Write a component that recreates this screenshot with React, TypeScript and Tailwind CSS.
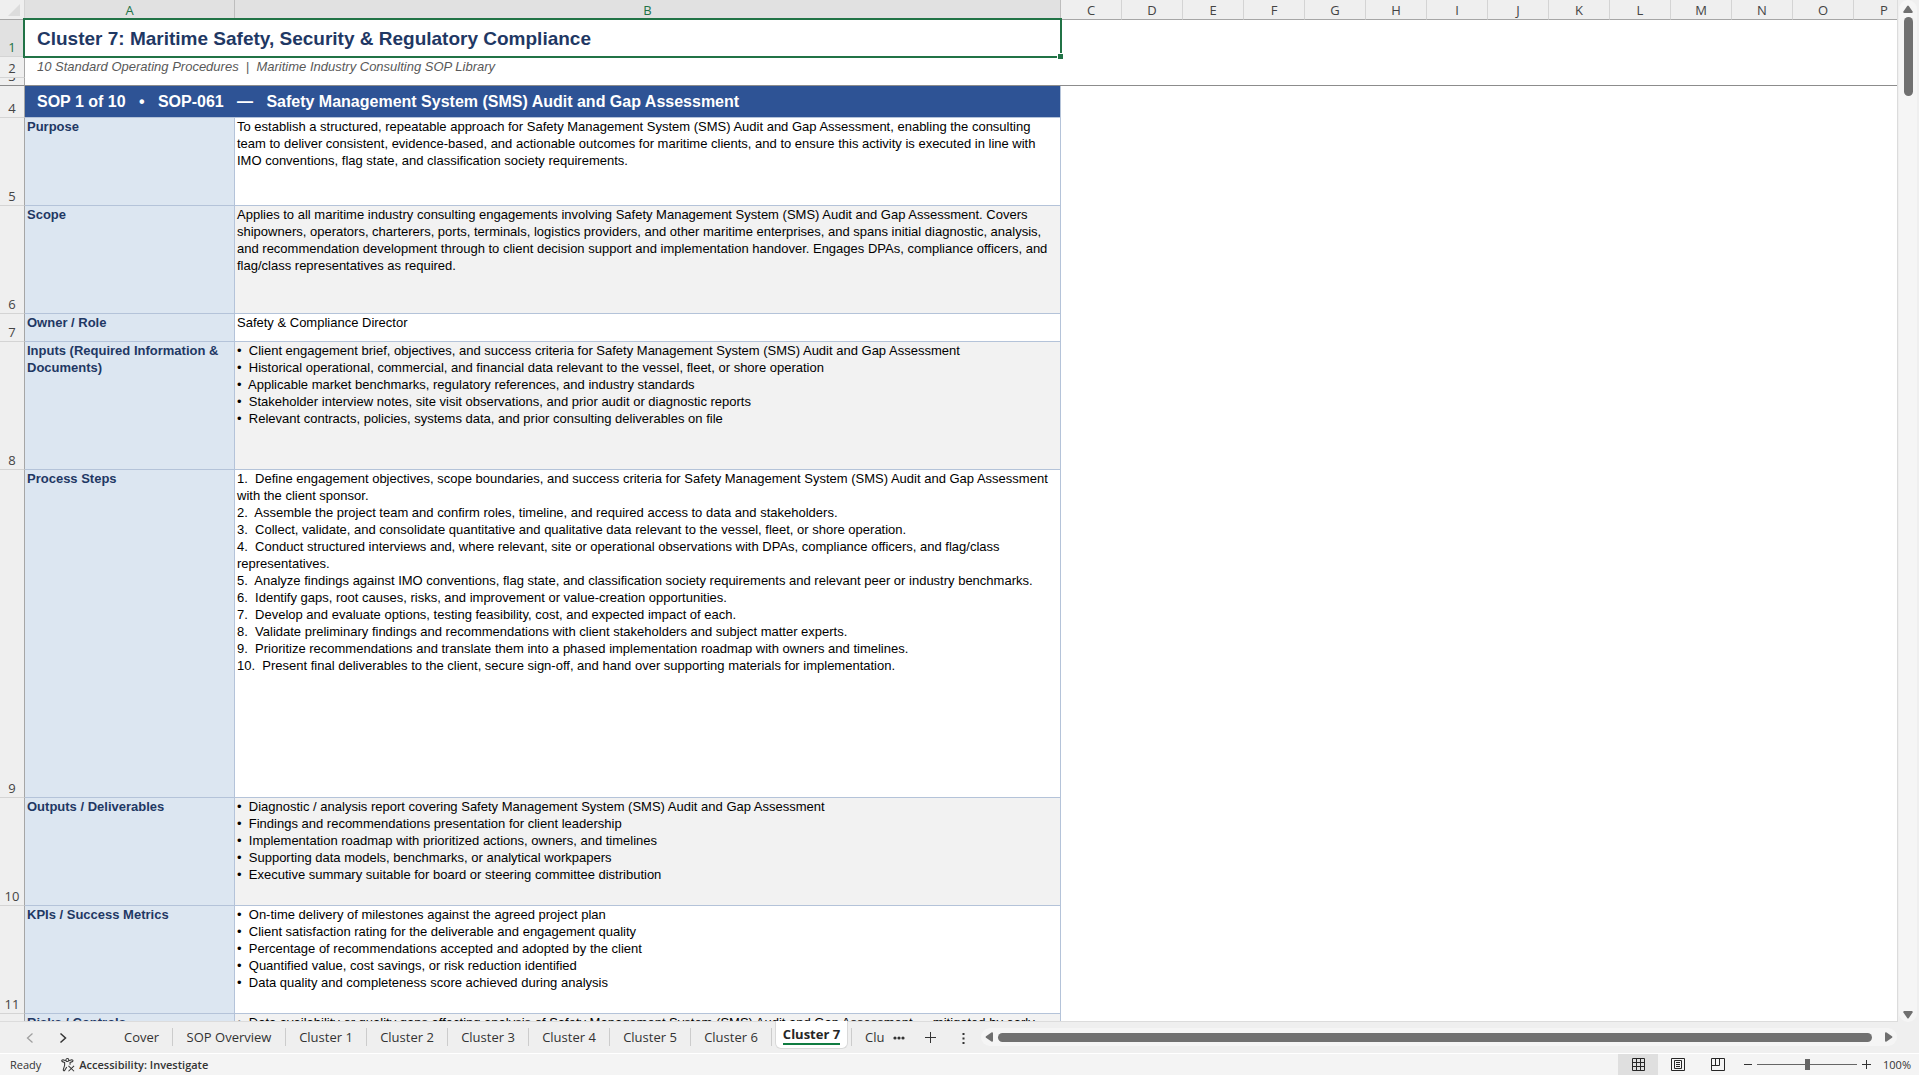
import { FC, ReactNode } from "react";
import clsx from "clsx";

interface SopRow {
  num: number;
  label: string;
  height: string;
  shaded?: boolean;
  lines: string[];
}

const extraColumns = ["C", "D", "E", "F", "G", "H", "I", "J", "K", "L", "M", "N", "O", "P"];

const sopRows: SopRow[] = [
  {
    num: 5,
    label: "Purpose",
    height: "h-[88px]",
    lines: [
      "To establish a structured, repeatable approach for Safety Management System (SMS) Audit and Gap Assessment, enabling the consulting team to deliver consistent, evidence-based, and actionable outcomes for maritime clients, and to ensure this activity is executed in line with IMO conventions, flag state, and classification society requirements.",
    ],
  },
  {
    num: 6,
    label: "Scope",
    height: "h-[108px]",
    shaded: true,
    lines: [
      "Applies to all maritime industry consulting engagements involving Safety Management System (SMS) Audit and Gap Assessment. Covers shipowners, operators, charterers, ports, terminals, logistics providers, and other maritime enterprises, and spans initial diagnostic, analysis, and recommendation development through to client decision support and implementation handover. Engages DPAs, compliance officers, and flag/class representatives as required.",
    ],
  },
  {
    num: 7,
    label: "Owner / Role",
    height: "h-[28px]",
    lines: ["Safety & Compliance Director"],
  },
  {
    num: 8,
    label: "Inputs (Required Information & Documents)",
    height: "h-[128px]",
    shaded: true,
    lines: [
      "•  Client engagement brief, objectives, and success criteria for Safety Management System (SMS) Audit and Gap Assessment",
      "•  Historical operational, commercial, and financial data relevant to the vessel, fleet, or shore operation",
      "•  Applicable market benchmarks, regulatory references, and industry standards",
      "•  Stakeholder interview notes, site visit observations, and prior audit or diagnostic reports",
      "•  Relevant contracts, policies, systems data, and prior consulting deliverables on file",
    ],
  },
  {
    num: 9,
    label: "Process Steps",
    height: "h-[328px]",
    lines: [
      "1.  Define engagement objectives, scope boundaries, and success criteria for Safety Management System (SMS) Audit and Gap Assessment with the client sponsor.",
      "2.  Assemble the project team and confirm roles, timeline, and required access to data and stakeholders.",
      "3.  Collect, validate, and consolidate quantitative and qualitative data relevant to the vessel, fleet, or shore operation.",
      "4.  Conduct structured interviews and, where relevant, site or operational observations with DPAs, compliance officers, and flag/class representatives.",
      "5.  Analyze findings against IMO conventions, flag state, and classification society requirements and relevant peer or industry benchmarks.",
      "6.  Identify gaps, root causes, risks, and improvement or value-creation opportunities.",
      "7.  Develop and evaluate options, testing feasibility, cost, and expected impact of each.",
      "8.  Validate preliminary findings and recommendations with client stakeholders and subject matter experts.",
      "9.  Prioritize recommendations and translate them into a phased implementation roadmap with owners and timelines.",
      "10.  Present final deliverables to the client, secure sign-off, and hand over supporting materials for implementation.",
    ],
  },
  {
    num: 10,
    label: "Outputs / Deliverables",
    height: "h-[108px]",
    shaded: true,
    lines: [
      "•  Diagnostic / analysis report covering Safety Management System (SMS) Audit and Gap Assessment",
      "•  Findings and recommendations presentation for client leadership",
      "•  Implementation roadmap with prioritized actions, owners, and timelines",
      "•  Supporting data models, benchmarks, or analytical workpapers",
      "•  Executive summary suitable for board or steering committee distribution",
    ],
  },
  {
    num: 11,
    label: "KPIs / Success Metrics",
    height: "h-[108px]",
    lines: [
      "•  On-time delivery of milestones against the agreed project plan",
      "•  Client satisfaction rating for the deliverable and engagement quality",
      "•  Percentage of recommendations accepted and adopted by the client",
      "•  Quantified value, cost savings, or risk reduction identified",
      "•  Data quality and completeness score achieved during analysis",
    ],
  },
  {
    num: 12,
    label: "Risks / Controls",
    height: "h-[108px]",
    shaded: true,
    lines: [
      "•  Data availability or quality gaps affecting analysis of Safety Management System (SMS) Audit and Gap Assessment — mitigated by early",
    ],
  },
];

const sheets = [
  { name: "Cover", width: "w-[62px]" },
  { name: "SOP Overview", width: "w-[113px]" },
  { name: "Cluster 1", width: "w-[81px]" },
  { name: "Cluster 2", width: "w-[81px]" },
  { name: "Cluster 3", width: "w-[81px]" },
  { name: "Cluster 4", width: "w-[81px]" },
  { name: "Cluster 5", width: "w-[81px]" },
  { name: "Cluster 6", width: "w-[81px]" },
];

const RowHeader: FC<{ children?: ReactNode; selected?: boolean }> = ({
  children,
  selected,
}) => (
  <th
    scope="row"
    className={clsx(
      "overflow-hidden border-r border-b border-r-[#a6a6a6] border-b-[#d4d4d4] p-0 text-center align-bottom font-['Open_Sans',sans-serif] text-[13px] leading-[17px] font-normal",
      selected ? "bg-[#e1e1e1] text-[#217346]" : "bg-[#efefef] text-[#444444]"
    )}
  >
    {children}
  </th>
);

const Sheet = () => (
  <table className="w-[1915px] table-fixed border-separate border-spacing-0">
    <colgroup>
      <col className="w-[25px]" />
      <col className="w-[210px]" />
      <col className="w-[826px]" />
      {extraColumns.map((c) => (
        <col key={c} className="w-[61px]" />
      ))}
    </colgroup>
    <thead>
      <tr className="font-['Open_Sans',sans-serif] text-[13px] leading-[18px] text-[#444444]">
        <th className="h-5 border-r border-b border-r-[#d4d4d4] border-b-[#a6a6a6] bg-[#efefef] p-0">
          <svg className="ml-auto mr-1 size-3" viewBox="0 0 12 12" fill="#dcdcdc">
            <path d="M12 0V12H0Z" />
          </svg>
        </th>
        {["A", "B"].map((c) => (
          <th
            key={c}
            scope="col"
            className="h-5 border-r border-b border-r-[#bdbdbd] border-b-[#a6a6a6] bg-[#e1e1e1] p-0 pt-px font-normal text-[#217346]"
          >
            {c}
          </th>
        ))}
        {extraColumns.map((c) => (
          <th
            key={c}
            scope="col"
            className="h-5 border-r border-b border-r-[#d4d4d4] border-b-[#a6a6a6] bg-[#efefef] p-0 pt-px font-normal"
          >
            {c}
          </th>
        ))}
      </tr>
    </thead>
    <tbody className="font-['Liberation_Sans',Arial,sans-serif] text-[13px] leading-[17px] text-black">
      <tr>
        <RowHeader selected>1</RowHeader>
        <td colSpan={2} className="relative h-[37px] p-0 pl-3 align-middle text-[19px] leading-6 font-bold text-[#1f3864]">
          Cluster 7: Maritime Safety, Security &amp; Regulatory Compliance
          <span className="absolute -top-0.5 -right-px -bottom-px -left-0.5 border-2 border-[#217346]" />
          <span className="absolute -right-0.5 -bottom-0.5 size-1.5 border-t border-l border-white bg-[#217346]" />
        </td>
        <td colSpan={14} />
      </tr>
      <tr>
        <RowHeader>2</RowHeader>
        <td colSpan={2} className="h-[21px] p-0 pl-3 align-top leading-[19px] text-[#595959] italic">
          <span className="whitespace-pre">10 Standard Operating Procedures  |  Maritime Industry Consulting SOP Library</span>
        </td>
        <td colSpan={14} />
      </tr>
      <tr>
        <th
          scope="row"
          className="h-2 border-r border-b border-r-[#a6a6a6] border-b-[#8c8c8c] bg-[#efefef] p-0 font-['Open_Sans',sans-serif] text-[13px] font-normal text-[#444444]"
        >
          <div className="flex h-[7px] items-end justify-center overflow-hidden leading-[17px]">3</div>
        </th>
        <td colSpan={16} className="border-b border-[#8c8c8c] p-0" />
      </tr>
      <tr>
        <RowHeader>4</RowHeader>
        <td
          colSpan={2}
          className="h-8 border-r border-b border-[#b4c3d9] bg-[#2e5395] p-0 pl-3 align-middle text-[16px] leading-5 font-bold whitespace-pre text-white"
        >
          SOP 1 of 10   •   SOP-061   —   Safety Management System (SMS) Audit and Gap Assessment
        </td>
        <td colSpan={14} />
      </tr>
      {sopRows.map((row) => (
        <tr key={row.num}>
          <RowHeader>{row.num}</RowHeader>
          <td
            className={clsx(
              "border-r border-b border-[#b4c3d9] bg-[#dce6f1] p-0 pl-0.5 align-top font-bold text-[#1f3864]",
              row.height
            )}
          >
            {row.label}
          </td>
          <td
            className={clsx(
              "border-r border-b border-[#b4c3d9] p-0 pl-0.5 align-top",
              row.shaded && "bg-[#f2f2f2]"
            )}
          >
            {row.lines.map((line) => (
              <p key={line} className="whitespace-pre-wrap">
                {line}
              </p>
            ))}
          </td>
          <td colSpan={14} />
        </tr>
      ))}
    </tbody>
  </table>
);

const VerticalScroll = () => (
  <div className="flex w-[22px] shrink-0 border-l border-[#dcdcdc] bg-[#efefef] pl-px">
    <div className="flex w-[18px] flex-col items-center rounded-full bg-[#f5f5f5] pt-1 pb-[3px]">
      <button aria-label="Scroll up" className="flex h-[13px] items-start pt-px">
        <svg className="h-2 w-[10px]" viewBox="0 0 10 8" fill="#6f6f6f">
          <path d="M4.2 1Q5 0 5.8 1L9.6 6.4Q10 8 8.8 8H1.2Q0 8 .4 6.4Z" />
        </svg>
      </button>
      <div className="h-[79px] w-[9px] rounded-full bg-[#707070]" />
      <button aria-label="Scroll down" className="mt-auto">
        <svg className="h-2 w-[10px]" viewBox="0 0 10 8" fill="#6f6f6f">
          <path d="M4.2 7Q5 8 5.8 7L9.6 1.6Q10 0 8.8 0H1.2Q0 0 .4 1.6Z" />
        </svg>
      </button>
    </div>
  </div>
);

const TabBar = () => (
  <div className="flex h-8 shrink-0 items-start border-b border-white bg-[#efefef] pr-[22px] font-['Open_Sans',sans-serif] text-[13px] text-[#333333]">
    <div className="flex h-[31px] w-[111px] shrink-0 items-center gap-[25px] pl-[26px]">
      <button aria-label="Previous sheet">
        <svg className="h-3 w-2" viewBox="0 0 8 12" fill="none" stroke="#a0a0a0" strokeWidth="1.3">
          <path d="M6.5 1.5L1.5 6L6.5 10.5" />
        </svg>
      </button>
      <button aria-label="Next sheet">
        <svg className="h-3 w-2" viewBox="0 0 8 12" fill="none" stroke="#333333" strokeWidth="1.5">
          <path d="M1.5 1.5L6.5 6L1.5 10.5" />
        </svg>
      </button>
    </div>
    {sheets.map((s) => (
      <button
        key={s.name}
        className={clsx("mt-[6px] h-[18px] shrink-0 border-r border-[#cccccc] leading-[18px]", s.width)}
      >
        {s.name}
      </button>
    ))}
    <button className="z-10 -mt-px ml-[3px] flex h-7 w-[73px] shrink-0 justify-center rounded-b-md border border-t-0 border-[#d9d9d9] bg-white pt-1 font-bold text-[#262626]">
      <span className="h-5 border-b-2 border-[#107c41] leading-[18px]">Cluster 7</span>
    </button>
    <button className="mt-[6px] ml-[3px] h-[18px] w-[34px] shrink-0 border-l border-[#cccccc] pl-[13px] text-left leading-[18px]">
      Clu
    </button>
    <div className="flex h-[31px] w-[96px] shrink-0 items-center pl-2">
      <button aria-label="More sheets">
        <svg className="h-1 w-3" viewBox="0 0 12 4" fill="#333333">
          <circle cx="2" cy="2" r="1.6" />
          <circle cx="6" cy="2" r="1.6" />
          <circle cx="10" cy="2" r="1.6" />
        </svg>
      </button>
      <button aria-label="New sheet" className="ml-5">
        <svg className="size-[11px]" viewBox="0 0 11 11" stroke="#333333">
          <path d="M5.5 0V11M0 5.5H11" />
        </svg>
      </button>
      <button aria-label="Tab options" className="ml-[26px]">
        <svg className="h-3 w-[3px]" viewBox="0 0 3 12" fill="#333333">
          <path d="M.5 1h2v2h-2zM.5 5.5h2v2h-2zM.5 10h2v2h-2z" />
        </svg>
      </button>
    </div>
    <div className="mt-[6px] flex h-[18px] min-w-0 flex-1 items-center gap-[5px] rounded-full bg-[#f5f5f5] px-1">
      <button aria-label="Scroll left">
        <svg className="h-[10px] w-2" viewBox="0 0 8 10" fill="#6f6f6f">
          <path d="M1 4.2Q0 5 1 5.8L6.4 9.6Q8 10 8 8.8V1.2Q8 0 6.4 .4Z" />
        </svg>
      </button>
      <div className="mr-2 h-[9px] flex-1 rounded-full bg-[#707070]" />
      <button aria-label="Scroll right">
        <svg className="h-[10px] w-2" viewBox="0 0 8 10" fill="#6f6f6f">
          <path d="M7 4.2Q8 5 7 5.8L1.6 9.6Q0 10 0 8.8V1.2Q0 0 1.6 .4Z" />
        </svg>
      </button>
    </div>
  </div>
);

const StatusBar = () => (
  <div className="flex h-[21px] shrink-0 items-center bg-[#f4f4f4] pl-[10px] font-['Open_Sans',sans-serif] text-[11px] leading-[18px] text-[#333333]">
    <span>Ready</span>
    <button className="ml-5 flex items-center gap-1 font-semibold">
      <svg className="h-[14px] w-[14px]" viewBox="0 0 15 15" fill="none" stroke="#333333" strokeWidth="1.1">
        <circle cx="6.8" cy="2.2" r="1.6" />
        <path d="M5.2 2.9L2.2 2Q.6 1.9 .8 3.2Q1 3.9 3.9 4.8V7.8L2.4 12.6Q2.4 14 3.7 13.6L6.2 9.6M8.4 2.9L11.4 2Q13 1.9 12.8 3.2Q12.6 3.9 9.7 4.8V7.2" />
        <path d="M8 8.4L14 14.2M14 8.4L8 14.2" />
      </svg>
      Accessibility: Investigate
    </button>
    <div className="ml-auto flex h-full items-center">
      <button aria-label="Normal view" className="grid h-full w-10 place-items-center bg-[#dfdfdf]">
        <svg className="size-[13px]" viewBox="0 0 13 13" fill="none" stroke="#262626">
          <path d="M.5 .5h12v12H.5zM4.5 .5v12M8.5 .5v12M.5 4.5h12M.5 8.5h12" />
        </svg>
      </button>
      <button aria-label="Page layout view" className="grid h-full w-10 place-items-center">
        <svg className="h-[13px] w-[14px]" viewBox="0 0 14 13" fill="none" stroke="#262626">
          <path d="M.5 .5h13v12H.5zM3.5 2.5h7v8h-7zM5 4.5h4M5 6.5h4M5 8.5h4" />
        </svg>
      </button>
      <button aria-label="Page break preview" className="grid h-full w-10 place-items-center">
        <svg className="h-[13px] w-[14px]" viewBox="0 0 14 13" fill="none" stroke="#262626">
          <path d="M.5 .5h13v12H.5zM.5 7.5h8V.5M4.5 .5v7" />
        </svg>
      </button>
      <button aria-label="Zoom out" className="ml-[6px]">
        <svg className="size-2" viewBox="0 0 8 8" stroke="#333333">
          <path d="M0 3.5H8" />
        </svg>
      </button>
      <input
        type="range"
        aria-label="Zoom"
        min={10}
        max={190}
        defaultValue={100}
        className="mx-[5px] h-3 w-[100px] appearance-none bg-transparent [&::-webkit-slider-runnable-track]:h-px [&::-webkit-slider-runnable-track]:bg-[#666666] [&::-webkit-slider-thumb]:-mt-[5px] [&::-webkit-slider-thumb]:h-[11px] [&::-webkit-slider-thumb]:w-[5px] [&::-webkit-slider-thumb]:appearance-none [&::-webkit-slider-thumb]:bg-[#666666]"
      />
      <button aria-label="Zoom in">
        <svg className="size-[9px]" viewBox="0 0 9 9" stroke="#333333">
          <path d="M0 4.5H9M4.5 0V9" />
        </svg>
      </button>
      <button className="w-12 pr-2 text-right">100%</button>
    </div>
  </div>
);

const App = () => {
  return (
    <div className="flex h-screen flex-col overflow-hidden bg-[#efefef]">
      <div className="flex min-h-0 flex-1">
        <div className="min-w-0 flex-1 overflow-hidden border-b border-[#dcdcdc] bg-white">
          <Sheet />
        </div>
        <VerticalScroll />
      </div>
      <TabBar />
      <StatusBar />
    </div>
  );
};

export default App;
